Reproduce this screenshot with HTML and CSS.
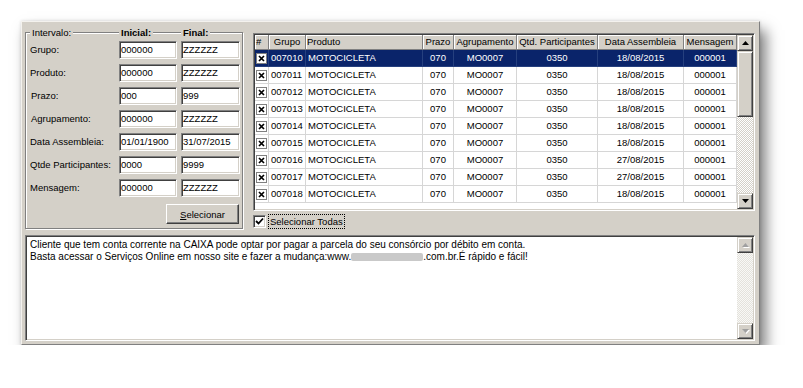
FILE: index.html
```html
<!DOCTYPE html>
<html lang="pt-BR">
<head>
<meta charset="utf-8">
<title>Seleção</title>
<link rel="stylesheet" href="styles.css">
</head>
<body>
<div class="window">
  <div class="top">
    <div class="groupbox">
      <div class="gb-head">
        <span class="gb-title first">Intervalo:</span>
        <span class="gb-title bold">Inicial:</span>
        <span class="gb-title bold last">Final:</span>
      </div>
      <div class="form">
        <span class="lbl">Grupo:</span><span class="input">000000</span><span class="input">ZZZZZZ</span>
        <span class="lbl">Produto:</span><span class="input">000000</span><span class="input">ZZZZZZ</span>
        <span class="lbl ind">Prazo:</span><span class="input">000</span><span class="input">999</span>
        <span class="lbl ind">Agrupamento:</span><span class="input">000000</span><span class="input">ZZZZZZ</span>
        <span class="lbl">Data Assembleia:</span><span class="input">01/01/1900</span><span class="input">31/07/2015</span>
        <span class="lbl">Qtde Participantes:</span><span class="input">0000</span><span class="input">9999</span>
        <span class="lbl">Mensagem:</span><span class="input">000000</span><span class="input">ZZZZZZ</span>
      </div>
      <div class="btn-row"><button class="btn" type="button"><u>S</u>elecionar</button></div>
    </div>

    <div class="right">
      <div class="grid">
        <div class="grid-body">
          <div class="row head">
            <span class="c">#</span><span class="c ctr">Grupo</span><span class="c">Produto</span><span class="c ctr">Prazo</span><span class="c ctr">Agrupamento</span><span class="c ctr">Qtd. Participantes</span><span class="c ctr">Data Assembleia</span><span class="c ctr">Mensagem</span>
          </div>
          <div class="row sel">
            <span class="c chk"><svg width="11" height="11" viewBox="0 0 11 11"><rect x="0.5" y="0.5" width="10" height="10" fill="#fff" stroke="#808080"/><path d="M3 3l5 5M8 3l-5 5" stroke="#000" stroke-width="1.7"/></svg></span><span class="c">007010</span><span class="c">MOTOCICLETA</span><span class="c ctr">070</span><span class="c ctr">MO0007</span><span class="c ctr">0350</span><span class="c ctr">18/08/2015</span><span class="c ctr">000001</span>
          </div>
          <div class="row">
            <span class="c chk"><svg width="11" height="11" viewBox="0 0 11 11"><rect x="0.5" y="0.5" width="10" height="10" fill="#fff" stroke="#808080"/><path d="M3 3l5 5M8 3l-5 5" stroke="#000" stroke-width="1.7"/></svg></span><span class="c">007011</span><span class="c">MOTOCICLETA</span><span class="c ctr">070</span><span class="c ctr">MO0007</span><span class="c ctr">0350</span><span class="c ctr">18/08/2015</span><span class="c ctr">000001</span>
          </div>
          <div class="row">
            <span class="c chk"><svg width="11" height="11" viewBox="0 0 11 11"><rect x="0.5" y="0.5" width="10" height="10" fill="#fff" stroke="#808080"/><path d="M3 3l5 5M8 3l-5 5" stroke="#000" stroke-width="1.7"/></svg></span><span class="c">007012</span><span class="c">MOTOCICLETA</span><span class="c ctr">070</span><span class="c ctr">MO0007</span><span class="c ctr">0350</span><span class="c ctr">18/08/2015</span><span class="c ctr">000001</span>
          </div>
          <div class="row">
            <span class="c chk"><svg width="11" height="11" viewBox="0 0 11 11"><rect x="0.5" y="0.5" width="10" height="10" fill="#fff" stroke="#808080"/><path d="M3 3l5 5M8 3l-5 5" stroke="#000" stroke-width="1.7"/></svg></span><span class="c">007013</span><span class="c">MOTOCICLETA</span><span class="c ctr">070</span><span class="c ctr">MO0007</span><span class="c ctr">0350</span><span class="c ctr">18/08/2015</span><span class="c ctr">000001</span>
          </div>
          <div class="row">
            <span class="c chk"><svg width="11" height="11" viewBox="0 0 11 11"><rect x="0.5" y="0.5" width="10" height="10" fill="#fff" stroke="#808080"/><path d="M3 3l5 5M8 3l-5 5" stroke="#000" stroke-width="1.7"/></svg></span><span class="c">007014</span><span class="c">MOTOCICLETA</span><span class="c ctr">070</span><span class="c ctr">MO0007</span><span class="c ctr">0350</span><span class="c ctr">18/08/2015</span><span class="c ctr">000001</span>
          </div>
          <div class="row">
            <span class="c chk"><svg width="11" height="11" viewBox="0 0 11 11"><rect x="0.5" y="0.5" width="10" height="10" fill="#fff" stroke="#808080"/><path d="M3 3l5 5M8 3l-5 5" stroke="#000" stroke-width="1.7"/></svg></span><span class="c">007015</span><span class="c">MOTOCICLETA</span><span class="c ctr">070</span><span class="c ctr">MO0007</span><span class="c ctr">0350</span><span class="c ctr">18/08/2015</span><span class="c ctr">000001</span>
          </div>
          <div class="row">
            <span class="c chk"><svg width="11" height="11" viewBox="0 0 11 11"><rect x="0.5" y="0.5" width="10" height="10" fill="#fff" stroke="#808080"/><path d="M3 3l5 5M8 3l-5 5" stroke="#000" stroke-width="1.7"/></svg></span><span class="c">007016</span><span class="c">MOTOCICLETA</span><span class="c ctr">070</span><span class="c ctr">MO0007</span><span class="c ctr">0350</span><span class="c ctr">27/08/2015</span><span class="c ctr">000001</span>
          </div>
          <div class="row">
            <span class="c chk"><svg width="11" height="11" viewBox="0 0 11 11"><rect x="0.5" y="0.5" width="10" height="10" fill="#fff" stroke="#808080"/><path d="M3 3l5 5M8 3l-5 5" stroke="#000" stroke-width="1.7"/></svg></span><span class="c">007017</span><span class="c">MOTOCICLETA</span><span class="c ctr">070</span><span class="c ctr">MO0007</span><span class="c ctr">0350</span><span class="c ctr">27/08/2015</span><span class="c ctr">000001</span>
          </div>
          <div class="row">
            <span class="c chk"><svg width="11" height="11" viewBox="0 0 11 11"><rect x="0.5" y="0.5" width="10" height="10" fill="#fff" stroke="#808080"/><path d="M3 3l5 5M8 3l-5 5" stroke="#000" stroke-width="1.7"/></svg></span><span class="c">007018</span><span class="c">MOTOCICLETA</span><span class="c ctr">070</span><span class="c ctr">MO0007</span><span class="c ctr">0350</span><span class="c ctr">18/08/2015</span><span class="c ctr">000001</span>
          </div>
        </div>
        <div class="vscroll">
          <div class="sb-btn"><svg width="7" height="4" viewBox="0 0 7 4"><path d="M3.5 0L7 4H0z" fill="#000"/></svg></div>
          <div class="sb-thumb"></div>
          <div class="sb-track"></div>
          <div class="sb-btn"><svg width="7" height="4" viewBox="0 0 7 4"><path d="M0 0h7L3.5 4z" fill="#000"/></svg></div>
        </div>
      </div>
      <div class="selall">
        <span class="cb"><svg width="9" height="9" viewBox="0 0 9 9"><path d="M1 4l2.5 2.5L8 1.5" fill="none" stroke="#000" stroke-width="1.8"/></svg></span>
        <span class="focus">Selecionar Todas</span>
      </div>
    </div>
  </div>

  <div class="memo">
    <div class="memo-text">
      <div>Cliente que tem conta corrente na CAIXA pode optar por pagar a parcela do seu consórcio por débito em conta.</div>
      <div>Basta acessar o Serviços Online em nosso site e fazer a mudança:www.<span class="redact"></span>.com.br.É rápido e fácil!</div>
    </div>
    <div class="vscroll memo-scroll">
      <div class="sb-btn dis"><svg width="7" height="4" viewBox="0 0 7 4"><path d="M3.5 0L7 4H0z" fill="#a0a0a0"/></svg></div>
      <div class="sb-track"></div>
      <div class="sb-btn dis"><svg width="7" height="4" viewBox="0 0 7 4"><path d="M0 0h7L3.5 4z" fill="#a0a0a0"/></svg></div>
    </div>
  </div>
</div>
</body>
</html>
```
FILE: styles.css
```css
* { box-sizing: border-box; }

html, body {
  margin: 0;
  padding: 0;
  background: #ffffff;
}

body {
  font-family: "Liberation Sans", Arial, sans-serif;
  font-size: 9.5px;
  color: #000;
}

.window {
  margin: 21px 0 0 21px;
  width: 739px;
  height: 324px;
  background: #d4d0c8;
  border: 1px solid;
  border-color: #f4f2ee #808080 #808080 #f4f2ee;
  padding: 10px 3px 3px 3px;
  box-shadow: 6px 9px 13px rgba(0, 0, 0, 0.5), 0 0 3px rgba(0, 0, 0, 0.15);
  display: flex;
  flex-direction: column;
}

.top {
  display: flex;
  gap: 10px;
  height: 197px;
}

/* ---------- Group box ---------- */
.groupbox {
  width: 218px;
  height: 197px;
  border: 1px solid #808080;
  box-shadow: inset 1px 1px 0 #fff, 1px 1px 0 #fff;
  padding: 0 5px 0 3px;
}

.gb-head {
  display: grid;
  grid-template-columns: 86px 58px 59px;
  column-gap: 4px;
  margin-top: -7px;
  height: 13px;
  line-height: 13px;
}

.gb-title {
  justify-self: start;
  background: #d4d0c8;
  padding: 0 2px;
}

.gb-title.first { margin-left: 1px; }
.bold { font-weight: bold; }

.form {
  margin-top: 2px;
  display: grid;
  grid-template-columns: 86px 58px 59px;
  grid-auto-rows: 18px;
  column-gap: 4px;
  row-gap: 5px;
}

.lbl {
  line-height: 18px;
  white-space: nowrap;
  padding-left: 1px;
}

.lbl.ind { padding-left: 2px; }

.input {
  background: #fff;
  border: 1px solid;
  border-color: #808080 #fff #fff #808080;
  box-shadow: inset 1px 1px 0 #404040, inset -1px -1px 0 #d4d0c8;
  line-height: 16px;
  padding-left: 1px;
  white-space: nowrap;
  overflow: hidden;
}

.btn-row {
  display: flex;
  justify-content: flex-end;
  margin-top: 7px;
  margin-right: -2px;
}

.btn {
  width: 73px;
  height: 20px;
  font: inherit;
  color: #000;
  background: #d4d0c8;
  border: 1px solid;
  border-color: #fff #404040 #404040 #fff;
  box-shadow: inset -1px -1px 0 #808080;
  padding: 0;
}

/* ---------- Grid ---------- */
.right {
  margin-top: 1px;
  width: 502px;
  display: flex;
  flex-direction: column;
}

.grid {
  height: 178px;
  display: flex;
  background: #fff;
  border: 1px solid;
  border-color: #808080 #fff #fff #808080;
  box-shadow: inset 1px 1px 0 #404040, inset -1px -1px 0 #d4d0c8;
  padding: 1px;
}

.grid-body {
  width: 482px;
  display: flex;
  flex-direction: column;
}

.row {
  display: grid;
  grid-template-columns: 14px 37px 117px 31px 63px 81px 86px 53px;
  height: 17px;
}

.c {
  border-right: 1px solid #d6d6d6;
  border-bottom: 1px solid #d6d6d6;
  padding: 0 2px;
  line-height: 16px;
  white-space: nowrap;
  overflow: hidden;
}

.ctr { text-align: center; }

.row.head { height: 15px; }

.row.head .c {
  background: #d4d0c8;
  border-right-color: #808080;
  border-bottom-color: #808080;
  box-shadow: inset 1px 1px 0 #fff;
  line-height: 14px;
  padding: 0 1px;
}

.row.sel {
  background: #0a246a;
  color: #fff;
}

.row.sel .c {
  border-color: #26407e;
}

.c.chk {
  padding: 0;
  display: flex;
  align-items: center;
  justify-content: center;
}

/* ---------- Scrollbars ---------- */
.vscroll {
  width: 16px;
  display: flex;
  flex-direction: column;
}

.sb-btn {
  height: 16px;
  flex: none;
  background: #d4d0c8;
  border: 1px solid;
  border-color: #d4d0c8 #404040 #404040 #d4d0c8;
  box-shadow: inset 1px 1px 0 #fff, inset -1px -1px 0 #808080;
  display: flex;
  align-items: center;
  justify-content: center;
}

.sb-btn.dis svg { filter: drop-shadow(1px 1px 0 #fff); }

.sb-thumb {
  height: 66px;
  flex: none;
  background: #d4d0c8;
  border: 1px solid;
  border-color: #d4d0c8 #404040 #404040 #d4d0c8;
  box-shadow: inset 1px 1px 0 #fff, inset -1px -1px 0 #808080;
}

.sb-track {
  flex: 1;
  background: repeating-conic-gradient(#d4d0c8 0 25%, #fff 0 50%) 0 0 / 2px 2px;
}

/* ---------- Select all ---------- */
.selall {
  margin-top: 3px;
  display: flex;
  align-items: center;
  gap: 2px;
  height: 14px;
}

.cb {
  width: 13px;
  height: 13px;
  background: #fff;
  border: 1px solid;
  border-color: #808080 #fff #fff #808080;
  box-shadow: inset 1px 1px 0 #404040, inset -1px -1px 0 #d4d0c8;
  display: flex;
  align-items: center;
  justify-content: center;
}

.focus {
  outline: 1px dotted #000;
  padding: 0 1px;
  line-height: 13px;
  margin-left: 1px;
}

/* ---------- Memo ---------- */
.memo {
  margin-top: 6px;
  width: 730px;
  height: 106px;
  display: flex;
  background: #fff;
  border: 1px solid;
  border-color: #808080 #fff #fff #808080;
  box-shadow: inset 1px 1px 0 #404040, inset -1px -1px 0 #d4d0c8;
  padding: 1px;
}

.memo-text {
  flex: 1;
  padding: 2px 0 0 3px;
  font-size: 10px;
  line-height: 12px;
  white-space: nowrap;
}

.redact {
  display: inline-block;
  width: 72px;
  height: 8px;
  vertical-align: -1px;
  background: #c9c9c9;
  border-radius: 2px;
}

.memo-scroll .sb-track {
  background: repeating-conic-gradient(#e4e2dc 0 25%, #f8f8f6 0 50%) 0 0 / 2px 2px;
}
```
